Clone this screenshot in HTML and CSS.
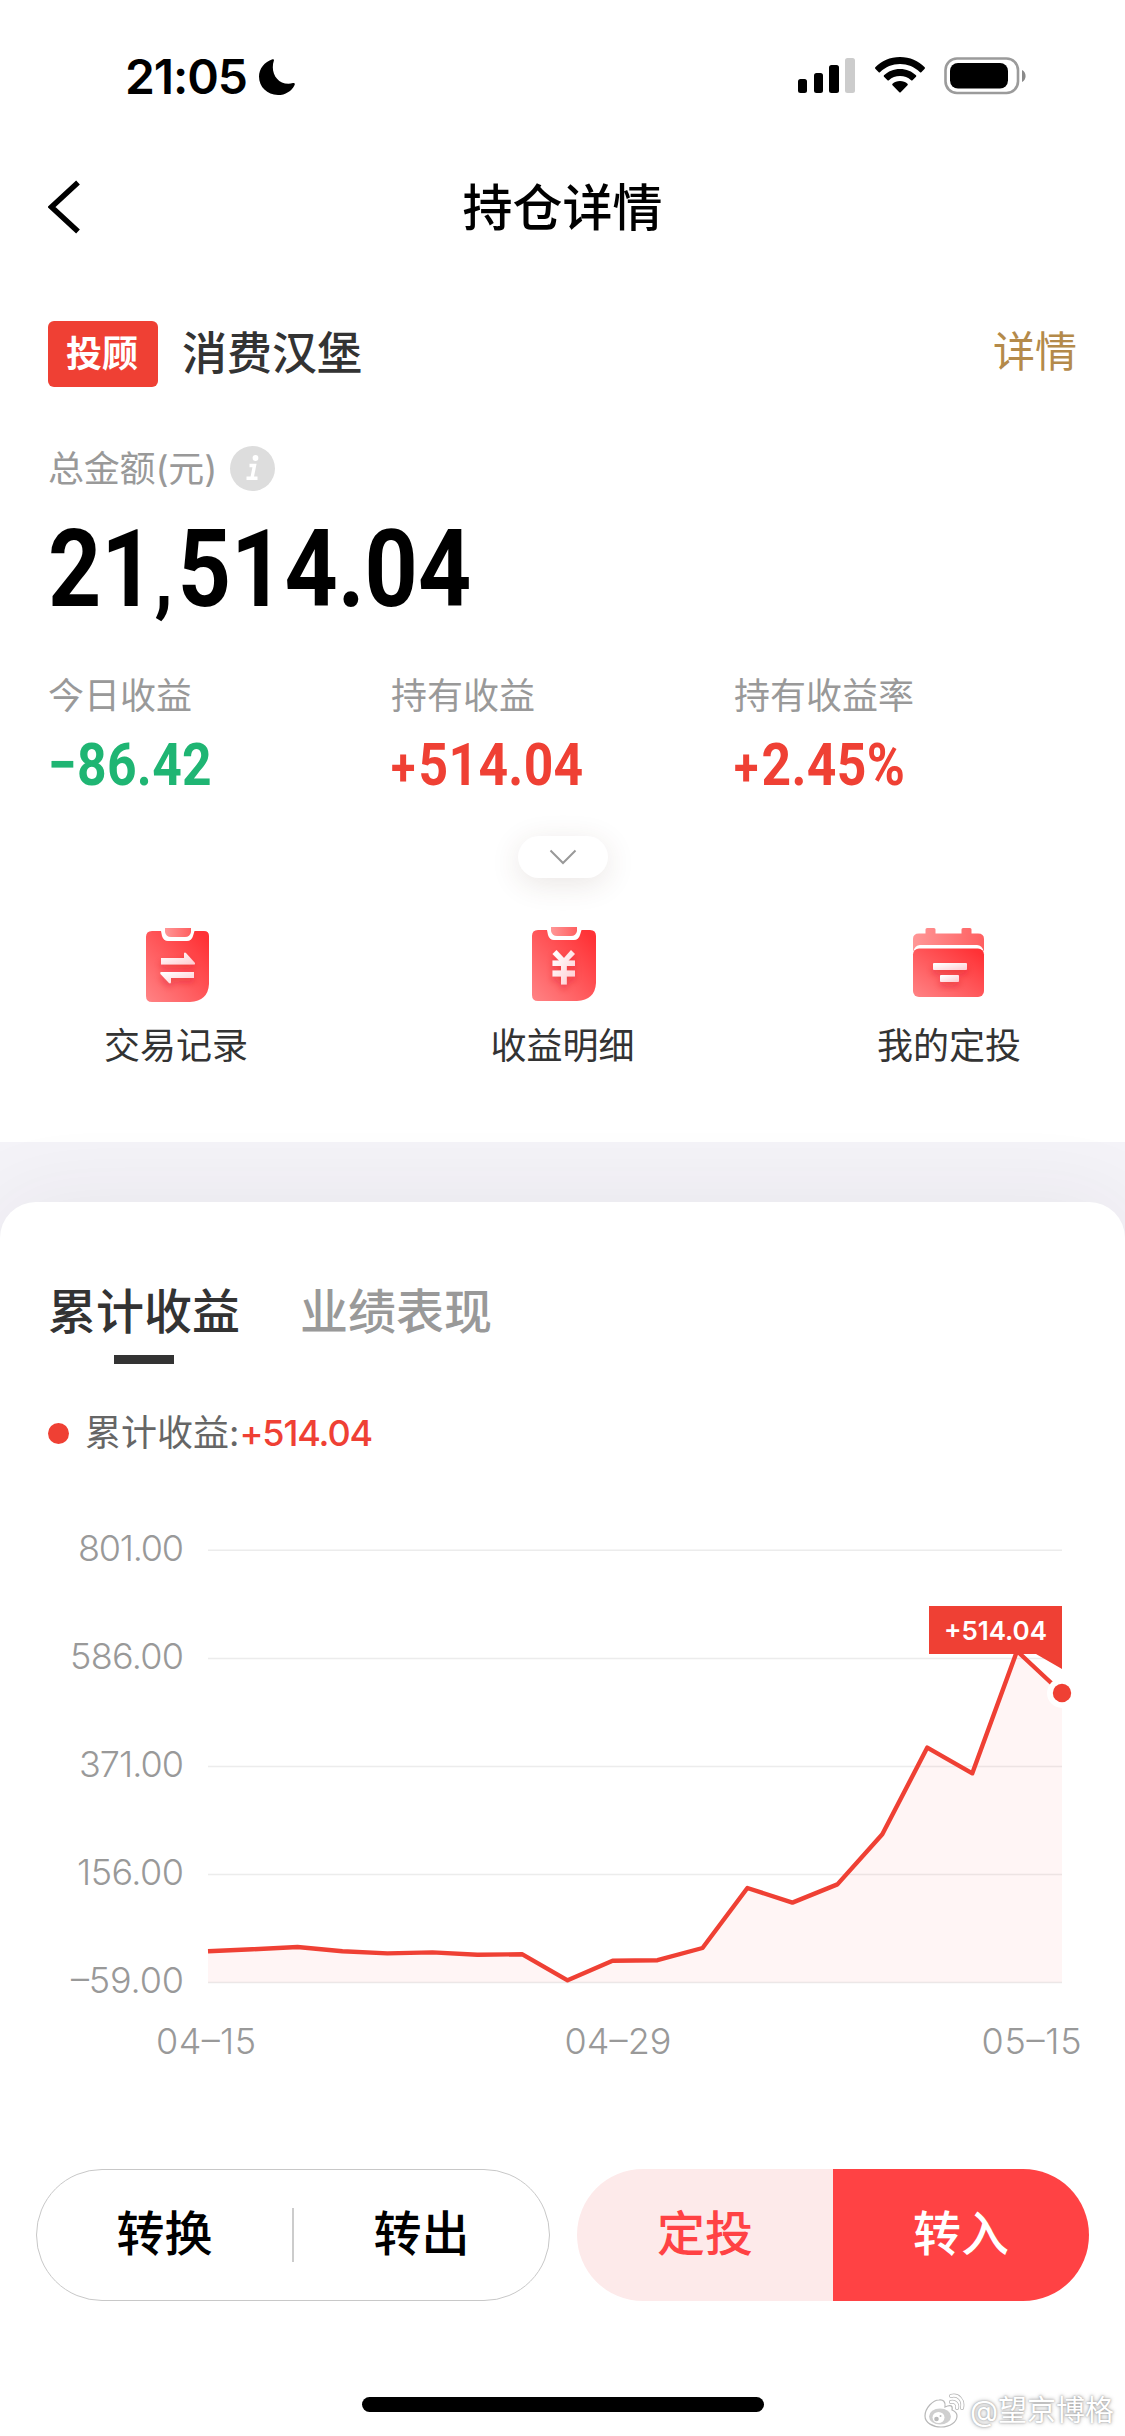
FILE: index.html
```html
<!DOCTYPE html>
<html lang="zh-CN">
    <head>
        <meta charset="UTF-8">
        <title>持仓详情</title>
        <link rel="stylesheet" href="styles.css">
    </head>
    <body>
        <div class="status">
            <div class="clock">
                <span class="time">21:05</span>
                <svg class="moon" width="36" height="36" viewBox="0 0 36 36">
                    <path d="M13.5 0.3C14.5 -0.2 15.3 0.6 14.9 1.6C10.6 14.5 19.5 27.5 34 24.1C35.4 23.8 36.2 24.7 35.6 25.9C32.7 32 26.4 36 19 36C8.200 36 0 28 0 17.600C0 9.800 5.500 2.800 13.500 0.300Z"/>
                </svg>
            </div>
            <div class="signals">
                <svg width="58" height="38" viewBox="0 0 58 38">
                    <rect x="0" y="22" width="9" height="14" rx="2.500"/>
                    <rect x="16" y="16" width="9" height="20" rx="2.500"/>
                    <rect x="31" y="8" width="10" height="28" rx="2.500"/>
                    <rect x="47" y="1" width="10" height="35" rx="2.500" fill="#ccc"/>
                </svg>
                <svg class="wifi" width="52" height="38" viewBox="0 0 52 38">
                    <path d="M26 0C36 0 44.500 4 50.700 10.300Q51.300 11 50.700 11.700L47.300 15.200Q46.600 15.800 46 15.200C40.500 9.900 33.500 7 26 7S11.500 9.900 6 15.200Q5.400 15.800 4.700 15.200L1.300 11.700Q0.700 11 1.300 10.300C7.500 4 16 0 26 0Z"/>
                    <path d="M26 12C32.500 12 37.800 14.300 42 18.300Q42.700 19 42 19.800L38.500 23.200Q37.800 23.900 37.100 23.200C34 20.400 30.300 19 26 19S18 20.400 14.900 23.200Q14.200 23.900 13.500 23.200L10 19.800Q9.300 19 10 18.300C14.200 14.300 19.500 12 26 12Z"/>
                    <path d="M26 24C29 24 31.500 25 33.500 26.800Q34.200 27.500 33.500 28.200L26.700 35.200Q26 35.900 25.300 35.200L18.500 28.200Q17.800 27.500 18.500 26.800C20.500 25 23 24 26 24Z"/>
                </svg>
                <svg class="battery" width="84" height="38" viewBox="0 0 84 38">
                    <rect x="1.500" y="1.500" width="72.500" height="34.500" rx="11.500" fill="none" stroke="#9b9b9b" stroke-width="2.600"/>
                    <rect x="6" y="6" width="58" height="25.500" rx="8"/>
                    <path d="M78 13C82.800 15 82.800 23 78 25Z" fill="#8a8a8a"/>
                </svg>
            </div>
        </div>

        <div class="nav">
            <svg class="back" width="34" height="56" viewBox="0 0 34 56">
                <path d="M30 2.500L3.500 27L30 51.500" fill="none" stroke="#000" stroke-width="5.500"/>
            </svg>
            <div class="title">持仓详情</div>
        </div>

        <div class="summary">
            <div class="fund">
                <span class="badge">投顾</span>
                <span class="fundName">消费汉堡</span>
                <span class="detail">详情</span>
            </div>
            <div class="totalLabel">
                <span>总金额(元)</span>
                <svg width="45" height="45" viewBox="0 0 45 45">
                    <circle cx="22.500" cy="22.500" r="22.500" fill="#ddd"/>
                    <circle cx="25.500" cy="12" r="2.900" fill="#fff"/>
                    <path d="M19.500 19.500H24.500L22 32M16.500 32.300H27.500" fill="none" stroke="#fff" stroke-width="3.400"/>
                </svg>
            </div>
            <div class="total"><span class="din">21<span class="comma">,</span>514.04</span></div>
            <div class="profits">
                <div>
                    <div class="profitLabel">今日收益</div>
                    <div class="profitValue down"><span class="din">−86.42</span></div>
                </div>
                <div>
                    <div class="profitLabel">持有收益</div>
                    <div class="profitValue up"><span class="din"><span class="plus">+</span>514.04</span></div>
                </div>
                <div>
                    <div class="profitLabel">持有收益率</div>
                    <div class="profitValue up"><span class="din"><span class="plus">+</span>2.45%</span></div>
                </div>
            </div>
            <div class="expand">
                <svg width="28" height="16" viewBox="0 0 28 16">
                    <path d="M1.500 1.500L14 14L26.500 1.500" fill="none" stroke="#999" stroke-width="2"/>
                </svg>
            </div>
            <div class="shortcuts">
                <div class="shortcut">
                    <svg width="80" height="80" viewBox="0 0 80 80">
                        <defs>
                            <linearGradient id="body" x1="1" y1="0" x2="0" y2="1">
                                <stop offset="0.080" stop-color="#ff3236"/>
                                <stop offset="1" stop-color="#ff8385"/>
                            </linearGradient>
                            <linearGradient id="clip" x1="0" y1="0" x2="1" y2="0">
                                <stop offset="0" stop-color="#ff9797"/>
                                <stop offset="1" stop-color="#ff5f60"/>
                            </linearGradient>
                            <linearGradient id="mark" x1="0" y1="0" x2="1" y2="1">
                                <stop offset="0.100" stop-color="#fff"/>
                                <stop offset="1" stop-color="#ffc9cf"/>
                            </linearGradient>
                            <filter id="shade" x="-50%" y="-50%" width="200%" height="200%">
                                <feDropShadow dx="0" dy="4" stdDeviation="3.500" flood-color="#d81e28" flood-opacity="0.450"/>
                            </filter>
                        </defs>
                        <path d="M16 6H25L26 11Q27.500 16 32 16H51Q55.500 16 57 11L58.500 6H68Q73 6 73 11V59Q72 76 54 77H16Q10 77 10 71V12Q10 6 16 6Z" fill="url(#body)"/>
                        <path d="M29 3H55V7Q54 12 49 12H35Q30 12 29 7Z" fill="url(#clip)"/>
                        <g filter="url(#shade)" fill="url(#mark)">
                            <path d="M25 33H48V28.500Q48.500 27 50 28L59 38Q59.500 39.500 58 39.500H25Z"/>
                            <path d="M58 47H25Q23.500 47.500 24.500 49L33 58Q35 59 35 57V53H58Z"/>
                        </g>
                    </svg>
                    <span>交易记录</span>
                </div>
                <div class="shortcut">
                    <svg width="80" height="80" viewBox="0 0 80 80">
                        <path d="M16 5H25L26 10Q27.500 15 32 15H52Q56.500 15 58 10L59.500 5H68Q74 5 74 11V58Q73 75 55 76H16Q10 76 10 70V11Q10 5 16 5Z" fill="url(#body)"/>
                        <path d="M29 2H55V6Q54 11 49 11H35Q30 11 29 6Z" fill="url(#clip)"/>
                        <g filter="url(#shade)" fill="url(#mark)">
                            <path d="M30.500 29L34.500 25L42 33L49 25L53 29L46.500 35.500H53V41H44.800V45.500H53V51.500H44.800V59.500H39V51.500H30.500V45.500H39V41H30.500V35.500H37Z"/>
                        </g>
                    </svg>
                    <span>收益明细</span>
                </div>
                <div class="shortcut">
                    <svg width="80" height="80" viewBox="0 0 80 80">
                        <path d="M4 27V14Q4 8.500 10 8.500H16.500V4.500Q16.500 3 18 3H25Q26.500 3 26.500 4.500V8.500H52.500V4.500Q52.500 3 54 3H61Q62.500 3 62.500 4.500V8.500H69Q75 8.500 75 14V27Q73 20 68 20H11Q6 20 4 27Z" fill="url(#clip)"/>
                        <rect x="4" y="23.500" width="71" height="48.500" rx="6" fill="url(#body)"/>
                        <g filter="url(#shade)" fill="url(#mark)">
                            <rect x="24" y="38" width="34" height="7" rx="1"/>
                            <rect x="31" y="50" width="19" height="7" rx="1"/>
                        </g>
                    </svg>
                    <span>我的定投</span>
                </div>
            </div>
        </div>

        <div class="card">
            <div class="tabs">
                <div class="tab active">累计收益</div>
                <div class="tab">业绩表现</div>
            </div>
            <div class="legend">
                <i class="dot"></i>
                <span>累计收益:</span>
                <b>+514.04</b>
            </div>
            <svg class="chart" width="1125" height="600" viewBox="0 0 1125 600">
                <g stroke="#ececec" stroke-width="1.500">
                    <path d="M208 50.300H1062"/>
                    <path d="M208 158.400H1062"/>
                    <path d="M208 266.500H1062"/>
                    <path d="M208 374.500H1062"/>
                    <path d="M208 482.500H1062"/>
                </g>
                <g class="yLabels">
                    <text x="184" y="61" textLength="106">801.00</text>
                    <text x="184" y="169" textLength="114">586.00</text>
                    <text x="184" y="277" textLength="105">371.00</text>
                    <text x="184" y="385" textLength="107">156.00</text>
                    <text x="184" y="493" textLength="113">–59.00</text>
                </g>
                <g class="xLabels">
                    <text x="206" y="554" textLength="100">04–15</text>
                    <text x="618" y="554" textLength="107">04–29</text>
                    <text x="1031.500" y="554" textLength="100">05–15</text>
                </g>
                <path class="area" d="M208 451.200L252.500 449.300L297.500 447L342.400 451.200L387.400 453.400L432.400 452.400L477.400 454.700L522.400 454.300L567.600 480.300L612.600 460.800L657.500 460.200L702.500 448L747.400 388L792.400 402.600L837.400 384.400L882.300 334.200L927.300 247.600L972.300 273.300L1017 151L1062 193V482.500H208Z"/>
                <path class="line" d="M208 451.200L252.500 449.300L297.500 447L342.400 451.200L387.400 453.400L432.400 452.400L477.400 454.700L522.400 454.300L567.600 480.300L612.600 460.800L657.500 460.200L702.500 448L747.400 388L792.400 402.600L837.400 384.400L882.300 334.200L927.300 247.600L972.300 273.300L1017 151L1062 193"/>
                <circle cx="1062" cy="193" r="15" fill="#fff"/>
                <circle cx="1062" cy="193" r="9.200" fill="#ef4034"/>
                <path d="M929 106H1062V169L1036 154H929Z" fill="#ef4034"/>
                <text class="tip" x="995.500" y="140" textLength="103">+514.04</text>
            </svg>
            <div class="actions">
                <div class="group out">
                    <div>转换</div>
                    <div class="divider"></div>
                    <div>转出</div>
                </div>
                <div class="group in">
                    <div class="plan">定投</div>
                    <div class="buy">转入</div>
                </div>
            </div>
            <div class="homeBar"></div>
        </div>

        <div class="watermark">
            <svg width="42" height="36" viewBox="0 0 42 36">
                <path d="M15 7C9 7 1 15 1 23C1 30 9 34 17 34C26 34 33 29 33 23C33 19 30 18 28 17C29 13 27 11 21 14C22 9 19 6 15 7Z" fill="#fff" stroke="#b8b8b8" stroke-width="1.200"/>
                <ellipse cx="16" cy="23.500" rx="11" ry="8" fill="#cfcfcf"/>
                <ellipse cx="14.500" cy="24.500" rx="6" ry="5.500" fill="#fff"/>
                <circle cx="12.500" cy="26" r="2.300" fill="#bbb"/>
                <circle cx="16.500" cy="23" r="1" fill="#bbb"/>
                <path d="M27 3C34 1 40 7 38 15M27 9C31 8 34 11 33 15" fill="none" stroke="#b8b8b8" stroke-width="4" stroke-linecap="round"/>
                <path d="M27 3C34 1 40 7 38 15M27 9C31 8 34 11 33 15" fill="none" stroke="#fff" stroke-width="2.500" stroke-linecap="round"/>
            </svg>
            <span>@望京博格</span>
        </div>
    </body>
</html>
```

FILE: styles.css
```css
body{
    margin: 0;
    width: 1125px;
    height: 2436px;
    position: relative;
    overflow: hidden;
    background: #f4f3f8;
    font-family: "Inter", "Noto Sans CJK SC", sans-serif;
    color: #333;
}
svg{
    display: block;
}

/* status bar */
.status{
    height: 132px;
    padding: 0 97px 0 125px;
    box-sizing: border-box;
    background: #fff;
    display: flex;
    justify-content: space-between;
    align-items: flex-start;
    color: #000;
}
.clock{
    display: flex;
    padding-top: 47px;
}
.time{
    width: 134px;
    font-size: 48px;
    line-height: 60px;
    font-weight: 600;
    letter-spacing: -1.1px;
}
.moon{
    margin-top: 12px;
}
.signals{
    display: flex;
    padding-top: 57px;
}
.wifi{
    margin-left: 18px;
}
.battery{
    margin-left: 18px;
}

/* header */
.nav{
    height: 152px;
    padding: 0 48px;
    background: #fff;
    display: grid;
    grid-template-columns: 100px 1fr 100px;
    align-items: center;
}
.title{
    font-size: 50px;
    line-height: 60px;
    font-weight: 500;
    text-align: center;
    color: #000;
}

.summary{
    height: 858px;
    padding: 37px 48px 0;
    box-sizing: border-box;
    background: #fff;
}
.fund{
    display: flex;
    align-items: center;
    height: 66px;
}
.badge{
    width: 108px;
    padding-right: 2px;
    line-height: 66px;
    border-radius: 6px;
    background: #ef4034;
    color: #fff;
    font-size: 36px;
    font-weight: 700;
    text-align: center;
}
.fundName{
    margin-left: 24px;
    font-size: 45px;
    line-height: 66px;
    font-weight: 500;
    flex: 1;
}
.detail{
    font-size: 42px;
    line-height: 60px;
    padding-bottom: 5px;
    color: #b48a4a;
}
.totalLabel{
    margin-top: 59px;
    display: flex;
    align-items: center;
    gap: 13px;
    height: 45px;
    font-size: 36px;
    line-height: 44px;
    letter-spacing: -0.2px;
    color: #999;
}
.din{
    display: inline-block;
    font-family: "Roboto", sans-serif;
    transform-origin: 0 50%;
    transform: scaleX(0.86);
}
.total{
    height: 90px;
    margin-top: 31px;
    font-size: 108px;
    line-height: 90px;
    font-weight: 700;
    color: #000;
}
.comma{
    display: inline-block;
    width: 27px;
    font-size: 86px;
    line-height: 60px;
}
.profits{
    margin-top: 62px;
    display: grid;
    grid-template-columns: 1fr 1fr 1fr;
}
.profitLabel{
    font-size: 36px;
    line-height: 44px;
    color: #999;
}
.profitValue{
    height: 60px;
    margin-top: 16px;
    font-size: 60px;
    line-height: 58px;
    font-weight: 700;
}
.profitValue .din{
    letter-spacing: 0.4px;
}
.plus{
    display: inline-block;
    width: 32px;
    font-size: 52px;
    line-height: 40px;
}
.down{
    color: #1fb573;
}
.up{
    color: #ef4034;
}
.expand{
    width: 90px;
    height: 42px;
    margin: 42px auto 0;
    border-radius: 21px;
    background: #fff;
    box-shadow: 0 6px 30px rgba(80, 50, 30, 0.12);
    display: flex;
    align-items: center;
    justify-content: center;
}
.shortcuts{
    margin-top: 47px;
    padding: 0 56px;
    display: flex;
    justify-content: space-between;
}
.shortcut{
    display: flex;
    flex-direction: column;
    align-items: center;
    gap: 19px;
    font-size: 36px;
    line-height: 44px;
}

/* profit card */
.card{
    margin-top: 60px;
    height: 1234px;
    box-sizing: border-box;
    padding-top: 80px;
    border-radius: 36px 36px 0 0;
    background: #fff;
    box-shadow: 0 0 90px rgba(60, 40, 60, 0.07);
}
.tabs{
    padding: 0 48px;
    display: flex;
    gap: 60px;
    font-size: 48px;
    line-height: 60px;
    font-weight: 500;
}
.tab{
    height: 82px;
    color: #999;
}
.active{
    color: #333;
}
.active::after{
    content: "";
    display: block;
    width: 60px;
    height: 9px;
    margin: 13px auto 0;
    background: #333;
}
.legend{
    margin-top: 49px;
    padding-left: 48px;
    display: flex;
    align-items: center;
    height: 40px;
    font-size: 36px;
    line-height: 38px;
    color: #666;
}
.legend b{
    color: #ef4034;
    font-weight: 500;
    letter-spacing: -1.1px;
}
.dot{
    width: 21px;
    height: 21px;
    margin-right: 16px;
    border-radius: 50%;
    background: #ef4034;
}
.chart{
    margin-top: 47px;
    font-size: 36px;
}
.yLabels{
    fill: #999;
    font-weight: 300;
    text-anchor: end;
}
.xLabels{
    fill: #999;
    font-weight: 350;
    text-anchor: middle;
}
.area{
    fill: rgba(255, 64, 52, 0.05);
}
.line{
    fill: none;
    stroke: #ef4034;
    stroke-width: 4.4;
    stroke-linejoin: round;
}
.tip{
    fill: #fff;
    font-size: 26px;
    font-weight: 600;
    text-anchor: middle;
}
.actions{
    margin: 69px 36px 0;
    display: flex;
    gap: 27px;
    font-size: 48px;
    line-height: 130px;
    font-weight: 500;
    text-align: center;
}
.group{
    flex: 1;
    height: 132px;
    box-sizing: border-box;
    border-radius: 66px;
    display: flex;
    align-items: center;
    overflow: hidden;
}
.group div{
    flex: 1;
    height: 132px;
}
.out{
    border: 1.5px solid #c8c8c8;
    color: #000;
}
.out .divider{
    flex: none;
    width: 2px;
    height: 54px;
    background: #ccc;
}
.plan{
    background: #fdeaea;
    color: #ff4244;
}
.buy{
    background: #ff4244;
    color: #fff;
}
.homeBar{
    width: 402px;
    height: 15px;
    margin: 96px auto 0;
    border-radius: 8px;
    background: #000;
}

.watermark{
    position: absolute;
    right: 11px;
    bottom: 5px;
    display: flex;
    align-items: center;
    gap: 4px;
    font-size: 29px;
    line-height: 40px;
    color: #fff;
    text-shadow: 0 0 2px #999, 0 0 4px #aaa;
}
```
